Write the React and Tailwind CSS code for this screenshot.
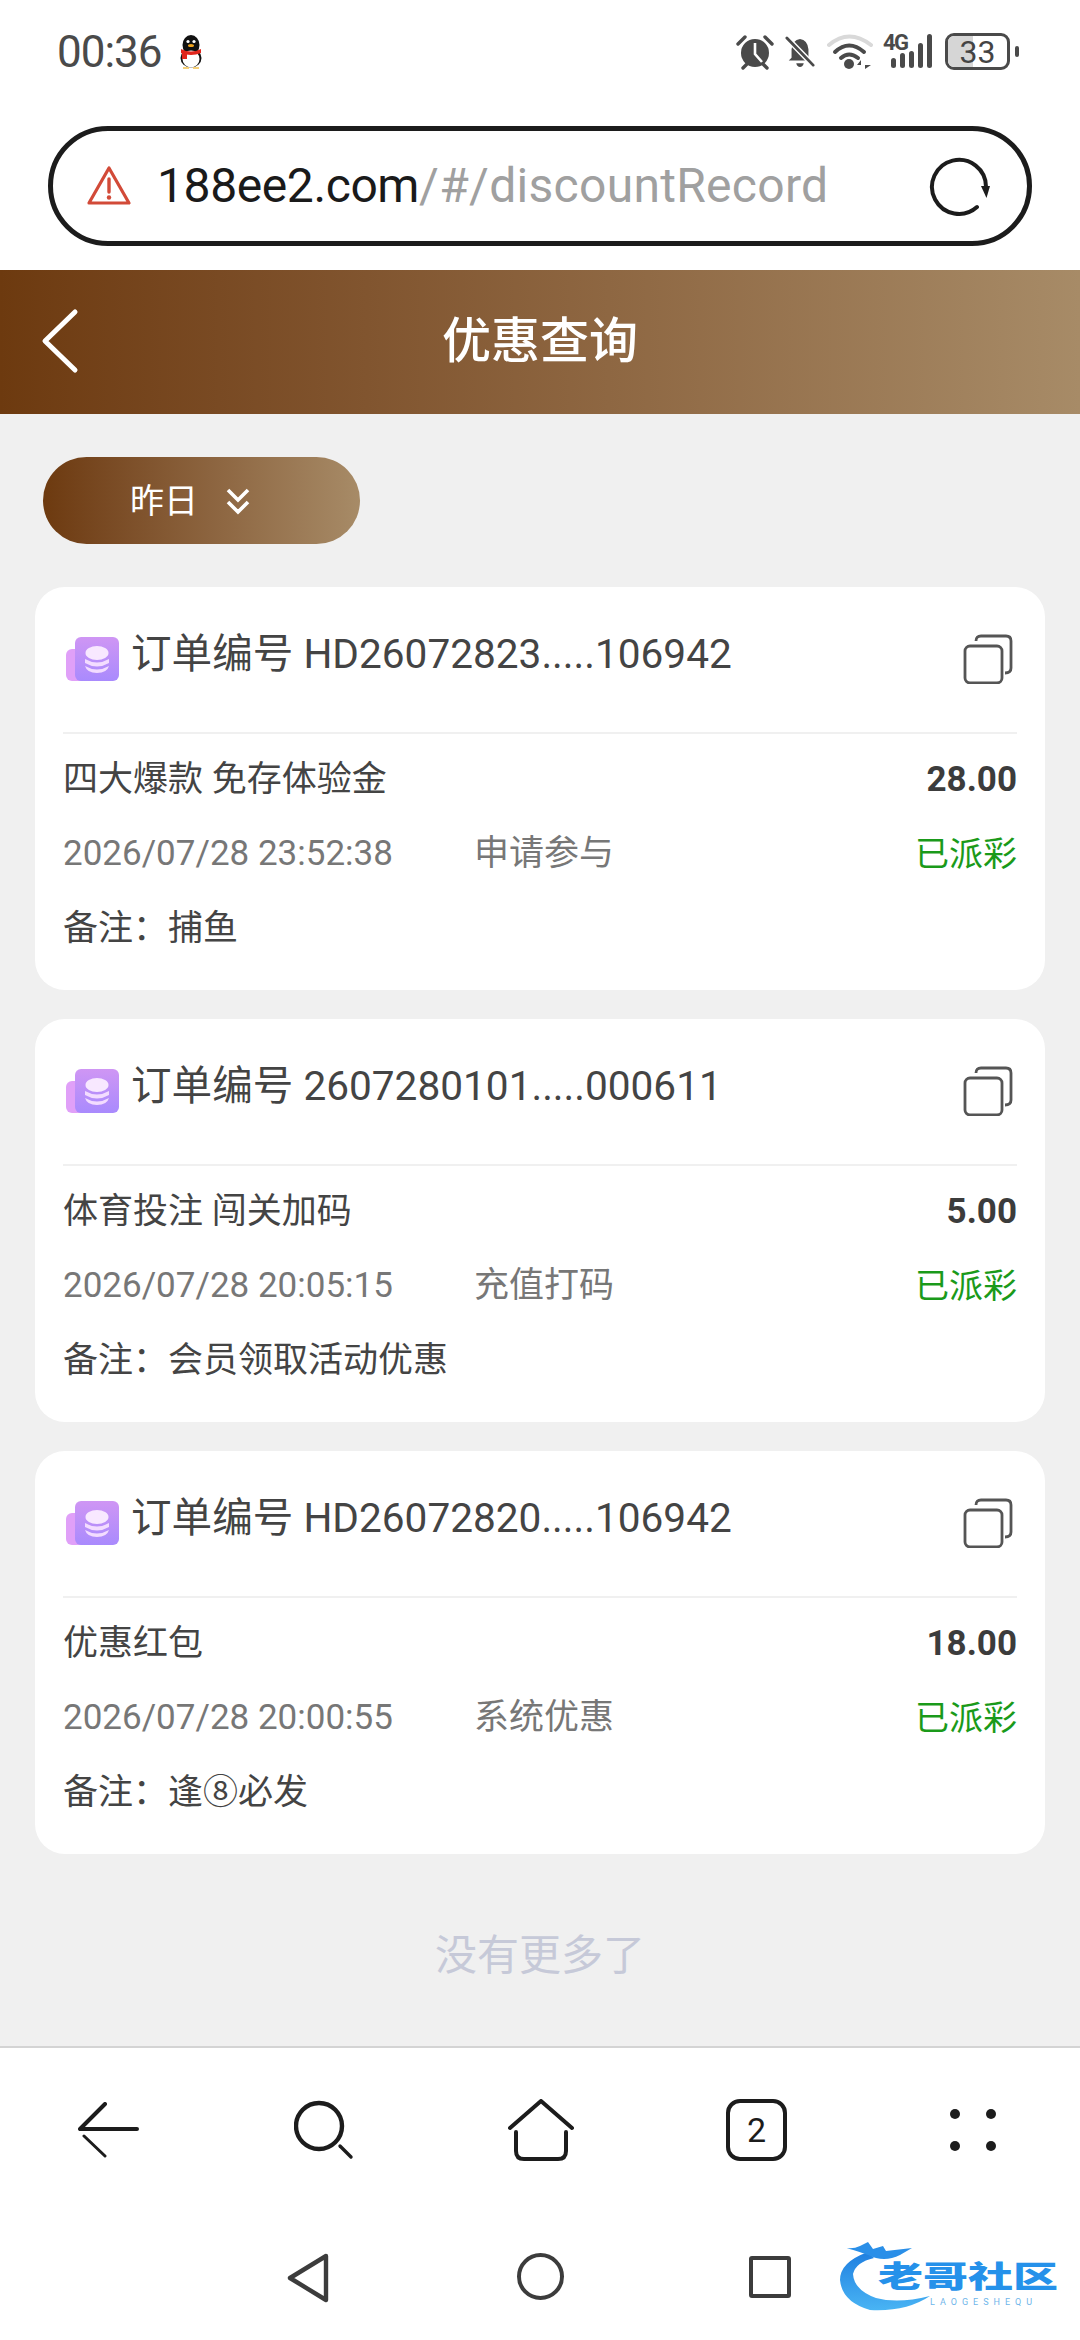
import React from "react";

const cards = [
  { no: "HD26072823.....106942", name: "四大爆款 免存体验金", amount: "28.00", time: "2026/07/28 23:52:38", kind: "申请参与", note: "捕鱼" },
  { no: "2607280101.....000611", name: "体育投注 闯关加码", amount: "5.00", time: "2026/07/28 20:05:15", kind: "充值打码", note: "会员领取活动优惠" },
  { no: "HD26072820.....106942", name: "优惠红包", amount: "18.00", time: "2026/07/28 20:00:55", kind: "系统优惠", note: "逢⑧必发" },
];

function Penguin() {
  return (
    <svg width="28" height="34" viewBox="0 0 28 34" className="ml-[15px]">
      <ellipse cx="14" cy="10" rx="8.5" ry="10" fill="#111" />
      <ellipse cx="14" cy="23" rx="10.5" ry="9.5" fill="#111" />
      <ellipse cx="14" cy="24" rx="8.5" ry="8.5" fill="#fff" />
      <ellipse cx="14" cy="10.5" rx="3" ry="1.6" fill="#f2a51e" />
      <circle cx="11" cy="6.5" r="1.6" fill="#fff" />
      <circle cx="17" cy="6.5" r="1.6" fill="#fff" />
      <path d="M4 14 Q14 19 24 14 L24 18 Q14 22 4 18Z" fill="#e0261c" />
      <rect x="5" y="17" width="5" height="7" fill="#e0261c" />
      <path d="M6 33 H12 M16 33 H22" stroke="#f2c14e" strokeWidth="1.6" />
    </svg>
  );
}

function StatusIcons() {
  const c = "#4a4a4a";
  return (
    <div className="flex items-center">
      <svg width="38" height="36" viewBox="0 0 38 36">
        <circle cx="19" cy="19" r="14" fill={c} />
        <path d="M19 9 V20 L26 28" stroke="#fff" strokeWidth="2.6" fill="none" />
        <path d="M2 10 L9 3 M36 10 L29 3 M7 34 L11 30 M31 34 L27 30" stroke={c} strokeWidth="3.4" strokeLinecap="round" />
      </svg>
      <svg width="30" height="34" viewBox="0 0 32 34" className="ml-[11px]">
        <path d="M4 26 L7 23 V14 Q8 4 16 3 Q24 4 25 14 V23 L28 26 Z" fill={c} />
        <path d="M12 29 H20 Q19 33 16 33 Q13 33 12 29Z" fill={c} />
        <path d="M2 2 L30 31" stroke="#fff" strokeWidth="6" />
        <path d="M2 2 L30 31" stroke={c} strokeWidth="3" strokeLinecap="round" />
      </svg>
      <svg width="46" height="36" viewBox="0 0 46 36" className="ml-[12px]">
        <path d="M2 11 Q22 -6 44 11" stroke="#d9d9d9" strokeWidth="4" fill="none" strokeLinecap="round" />
        <path d="M8 18 Q22 5 37 18" stroke={c} strokeWidth="4" fill="none" strokeLinecap="round" />
        <path d="M14 24 Q22 17 31 24" stroke={c} strokeWidth="4" fill="none" strokeLinecap="round" />
        <circle cx="22" cy="30" r="5" fill={c} />
        <path d="M34 35 V26 L30 31 H34 M38 26 V35 L44 31 H38" fill={c} />
      </svg>
      <div className="relative ml-[10px] h-[36px] w-[50px]">
        <span className="absolute left-0 top-[-2px] text-[22px] font-bold leading-[22px] tracking-[-1.5px] text-[#4a4a4a]">4G</span>
        <svg width="50" height="36" viewBox="0 0 50 36" className="absolute inset-0">
          <rect x="8" y="24" width="5" height="10" rx="2.5" fill={c} />
          <rect x="17" y="19" width="5" height="15" rx="2.5" fill={c} />
          <rect x="26" y="17" width="5" height="17" rx="2.5" fill={c} />
          <rect x="35" y="9" width="5" height="25" rx="2.5" fill={c} />
          <rect x="44" y="0" width="5" height="34" rx="2.5" fill={c} />
        </svg>
      </div>
      <div className="relative ml-[12px] flex h-[37px] w-[65px] items-center justify-center overflow-hidden rounded-[9px] border-[3px] border-[#4a4a4a]">
        <div className="absolute left-0 top-0 h-full w-[25px] bg-[#d6d6d6]" />
        <span className="relative text-[32px] font-normal leading-none text-[#444]">33</span>
      </div>
      <div className="ml-[5px] h-[11px] w-[4px] rounded-full bg-[#4a4a4a]" />
    </div>
  );
}

function AddressBar() {
  return (
    <div className="flex h-[120px] items-center rounded-full border-[5px] border-[#1c1c1c] bg-white pl-[33px] pr-[36px]">
      <svg width="46" height="42" viewBox="0 0 46 42" className="shrink-0">
        <path d="M23 3 L43 38 H3 Z" fill="none" stroke="#d24a38" strokeWidth="3.2" strokeLinejoin="round" />
        <path d="M23 14 V27" stroke="#d24a38" strokeWidth="3.4" strokeLinecap="round" />
        <circle cx="23" cy="32.5" r="2.2" fill="#d24a38" />
      </svg>
      <div className="ml-[25px] flex-1 whitespace-nowrap text-[48px] leading-none">
        <span className="tracking-[-0.4px] text-[#1a1a1a]">188ee2.com</span>
        <span className="tracking-[0.3px] text-[#a0a0a0]">/#/discountRecord</span>
      </div>
      <svg width="62" height="62" viewBox="0 0 62 62" className="shrink-0">
        <path d="M48 52 A27 27 0 1 1 57 32" fill="none" stroke="#1c1c1c" strokeWidth="4" strokeLinecap="round" />
        <path d="M52 31 H61 L57.5 43 Z" fill="#1c1c1c" />
      </svg>
    </div>
  );
}

function CoinIcon() {
  return (
    <svg width="56" height="46" viewBox="0 0 56 46" className="ml-[2px] shrink-0">
      <defs>
        <linearGradient id="coinA" x1="0" y1="0" x2="0" y2="1">
          <stop offset="0" stopColor="#cf96f4" />
          <stop offset="1" stopColor="#a98afd" />
        </linearGradient>
      </defs>
      <rect x="1" y="13" width="24" height="32" rx="6" fill="#e0a0f8" />
      <rect x="10" y="1" width="44" height="44" rx="6" fill="url(#coinA)" />
      <path d="M20 23 Q32 30 44 23 V27 Q32 34 20 27Z" fill="#f3dcff" />
      <path d="M20 30 Q32 37 44 30 Q42 37 32 37 Q22 37 20 30Z" fill="#f3dcff" />
      <ellipse cx="32" cy="17" rx="11.5" ry="7" fill="#f8e8ff" />
    </svg>
  );
}

function CopyIcon() {
  return (
    <svg width="50" height="50" viewBox="0 0 50 50" className="shrink-0">
      <path d="M13 7 Q13 2 18 2 H43 Q48 2 48 7 V34 Q48 39 42 39" fill="none" stroke="#555" strokeWidth="2.8" />
      <rect x="2" y="12" width="37" height="37" rx="5" fill="#fff" stroke="#555" strokeWidth="2.8" />
    </svg>
  );
}

function Card({ no, name, amount, time, kind, note }) {
  return (
    <div className="h-[403px] rounded-[30px] bg-white px-[28px]">
      <div className="flex h-[145px] items-start">
        <div className="mt-[49px]"><CoinIcon /></div>
        <div className="ml-[10px] mt-[42px] text-[40.6px] leading-[50px] text-[#444]">订单编号 {no}</div>
        <div className="ml-auto mr-[4px] mt-[47px]"><CopyIcon /></div>
      </div>
      <div className="h-[2px] bg-[#f0f0f0]" />
      <div className="mt-[21px] flex h-[50px] items-center justify-between text-[35px] text-[#444]">
        <span>{name}</span>
        <span className="font-bold text-[#3c3c3c]">{amount}</span>
      </div>
      <div className="mt-[24px] flex h-[50px] items-center text-[35px] text-[#777]">
        <span className="w-[411px] shrink-0">{time}</span>
        <span>{kind}</span>
        <span className="ml-auto text-[34px] text-[#1a9a1a]">已派彩</span>
      </div>
      <div className="mt-[25px] flex h-[50px] items-center text-[35px] text-[#444]">备注：{note}</div>
    </div>
  );
}

function BottomBar() {
  const k = "#1c1c1c";
  return (
    <div className="h-[294px] border-t-2 border-[#d4d4d4] bg-white">
      <div className="flex h-[164px] items-center pl-[78px]">
        <svg width="62" height="56" viewBox="0 0 62 56">
          <path d="M27 2 L2 27 H59" fill="none" stroke={k} strokeWidth="4" strokeLinecap="round" strokeLinejoin="round" />
          <path d="M6 34 L27 54" fill="none" stroke={k} strokeWidth="3" strokeLinecap="round" />
        </svg>
        <svg width="60" height="60" viewBox="0 0 60 60" className="ml-[154px]">
          <circle cx="25" cy="26" r="23" fill="none" stroke={k} strokeWidth="4.4" />
          <path d="M46 46 L57 57" stroke={k} strokeWidth="3.4" strokeLinecap="round" />
        </svg>
        <svg width="66" height="62" viewBox="0 0 66 62" className="ml-[154px]">
          <path d="M2 29 L33 2 L64 29" fill="none" stroke={k} strokeWidth="4" strokeLinecap="round" strokeLinejoin="round" />
          <path d="M8 33 V52 Q8 60 16 60 H50 Q58 60 58 52 V33" fill="none" stroke={k} strokeWidth="4" strokeLinecap="round" />
        </svg>
        <div className="ml-[152px] flex h-[62px] w-[61px] items-center justify-center rounded-[14px] border-[4px] border-[#1c1c1c] text-[34px] leading-none text-[#1c1c1c]">2</div>
        <div className="ml-[163px] grid h-[42px] w-[46px] grid-cols-2 content-between justify-between">
          <span className="h-[10px] w-[10px] rounded-full bg-[#1c1c1c]" />
          <span className="h-[10px] w-[10px] justify-self-end rounded-full bg-[#1c1c1c]" />
          <span className="h-[10px] w-[10px] rounded-full bg-[#1c1c1c]" />
          <span className="h-[10px] w-[10px] justify-self-end rounded-full bg-[#1c1c1c]" />
        </div>
      </div>
      <div className="relative flex h-[128px] items-start pt-[41px]">
        <svg width="44" height="50" viewBox="0 0 44 50" className="ml-[287px]">
          <path d="M39 3 L3 25 L39 47 Z" fill="none" stroke="#3c3c3c" strokeWidth="4.4" strokeLinejoin="round" />
        </svg>
        <div className="ml-[186px] h-[47px] w-[47px] rounded-full border-[4px] border-[#3c3c3c]" />
        <div className="ml-[185px] mt-[3px] h-[42px] w-[42px] rounded-[3px] border-[4px] border-[#3c3c3c]" />
        <div className="absolute left-[838px] top-[28px] h-[72px] w-[224px]">
          <svg width="224" height="72" viewBox="0 0 224 72" className="absolute inset-0">
            <defs>
              <linearGradient id="logoB" x1="0" y1="0" x2="0" y2="1">
                <stop offset="0" stopColor="#1f7fe0" />
                <stop offset="1" stopColor="#49b4f4" />
              </linearGradient>
            </defs>
            <path d="M30 12 Q2 22 2 40 Q4 62 32 70 Q68 72 92 56 Q60 64 38 58 Q16 50 15 34 Q18 22 36 18 Z" fill="url(#logoB)" />
            <path d="M3 7 Q14 10 22 6 L30 2 L35 9 L45 6 L48 11 L74 8 L62 15 Q46 23 30 15 Q14 9 3 7Z" fill="#2a8fe8" />
          </svg>
          <span className="absolute left-[40px] top-[22px] origin-left scale-x-[1.5] whitespace-nowrap text-[30px] font-black leading-[30px] text-[#2591ea]">老哥社区</span>
          <span className="absolute left-[92px] top-[57px] whitespace-nowrap text-[9px] leading-[10px] tracking-[5px] text-[#6fb6ea]">LAOGESHEQU</span>
        </div>
      </div>
    </div>
  );
}

export default function App() {
  return (
    <div className="flex h-[2340px] w-[1080px] flex-col overflow-hidden bg-white font-['Roboto','Noto_Sans_CJK_SC',sans-serif]">
      <div className="flex h-[105px] shrink-0 items-center pb-[2px] pl-[57px] pr-[61px]">
        <span className="text-[44px] leading-none tracking-[-1px] text-[#4a4a4a]">00:36</span>
        <Penguin />
        <div className="ml-auto"><StatusIcons /></div>
      </div>
      <div className="h-[165px] shrink-0 px-[48px] pt-[21px]">
        <AddressBar />
      </div>
      <div className="relative flex h-[144px] shrink-0 items-center justify-center bg-linear-to-r from-[#6d3a0f] to-[#a78b67] pb-[2px]">
        <svg width="40" height="66" viewBox="0 0 40 66" className="absolute left-[40px] top-[38px]">
          <path d="M35 4 L5 33 L35 62" fill="none" stroke="#fff" strokeWidth="5" strokeLinecap="round" strokeLinejoin="round" />
        </svg>
        <span className="text-[49px] font-medium leading-none text-white">优惠查询</span>
      </div>
      <div className="flex-1 bg-[#f0f0f0] px-[35px]">
        <div className="ml-[8px] mt-[43px] flex h-[87px] w-[317px] items-center rounded-[44px] bg-linear-to-r from-[#6d3a0f] to-[#a78b67] pl-[87px]">
          <span className="text-[34px] leading-none text-white">昨日</span>
          <svg width="24" height="28" viewBox="0 0 24 28" className="ml-[28px]">
            <path d="M2 3 L12 13 L22 3 M2 15 L12 25 L22 15" fill="none" stroke="#fff" strokeWidth="3.6" />
          </svg>
        </div>
        <div className="mt-[43px] flex flex-col gap-[29px]">
          {cards.map((c) => <Card key={c.no} {...c} />)}
        </div>
        <div className="mt-[77px] text-center text-[42px] leading-[50px] text-[#c6c9d8]">没有更多了</div>
      </div>
      <BottomBar />
    </div>
  );
}
